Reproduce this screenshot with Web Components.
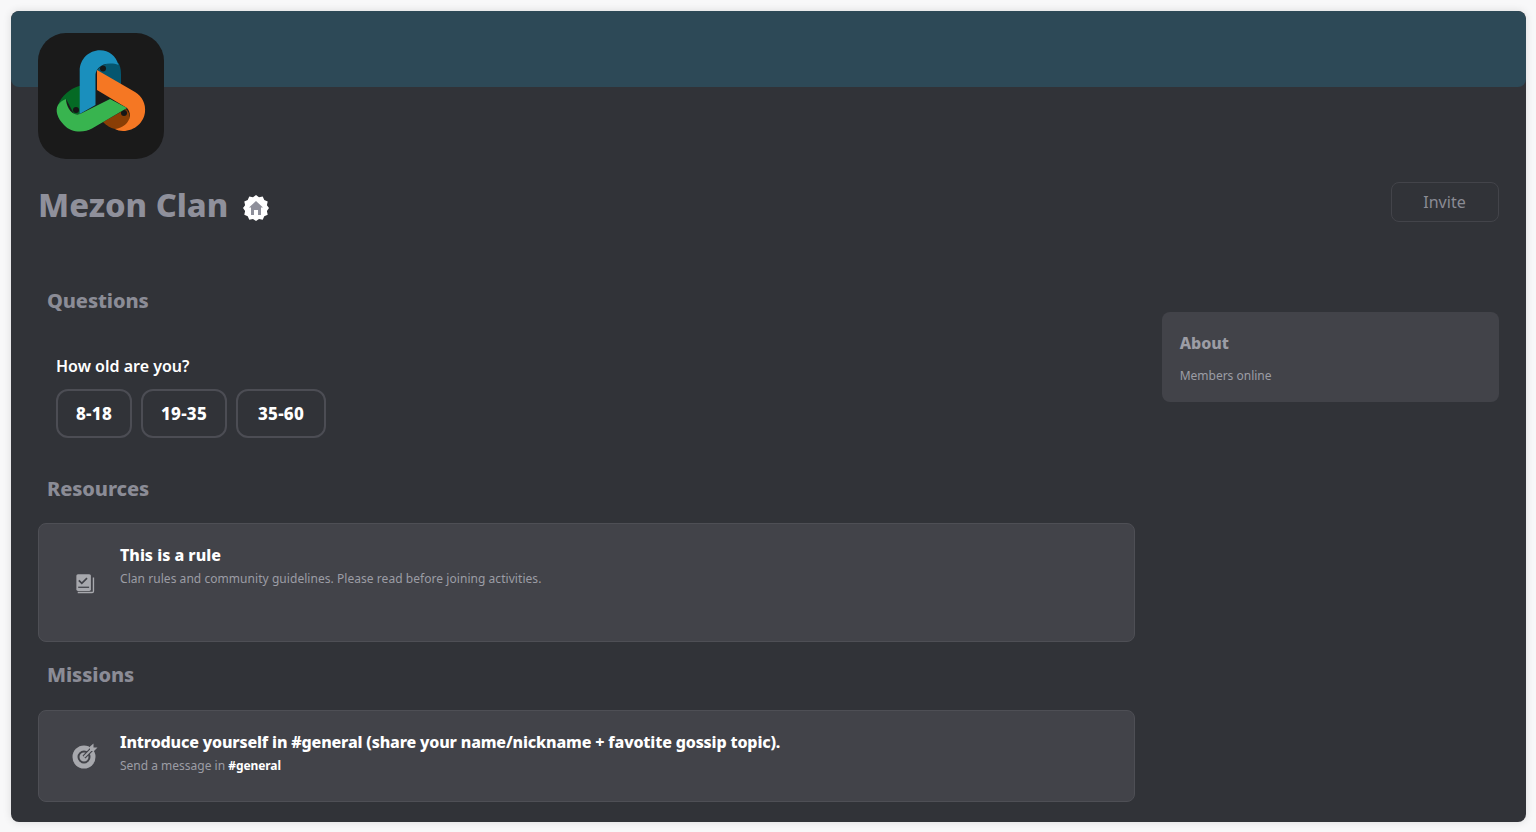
<!DOCTYPE html>
<html><head><meta charset="utf-8"><style>
html,body{margin:0;height:100%;background:#f8f8f9;overflow:hidden}
body{padding:10.5px;box-sizing:border-box;font-family:"Noto Sans","Liberation Sans",sans-serif}
</style></head><body>
<clan-page></clan-page>
<template id="t-page"><style>
:host{display:block;width:1515.5px;height:811.5px;background:#313338;border-radius:8px;box-shadow:0 0 8px rgba(0,0,0,.12);position:relative;overflow:hidden}
.banner{height:76.5px;background:#2d4957;border-radius:8px}
.main{padding:0 27.5px}
.logo{display:block;width:126px;height:126px;margin-top:-54px;position:relative}
.head{display:flex;justify-content:space-between;align-items:flex-start;margin-top:23px;height:40px}
.name{display:flex;align-items:center;gap:14px;font-size:32.700px;font-weight:800;line-height:46px;color:#8f909b}
.invite{box-sizing:border-box;width:108px;height:40px;border:1px solid #43444a;border-radius:8px;display:flex;align-items:center;justify-content:center;font-size:16px;color:#8a8b94}
.cols{display:flex;gap:27px;}
.left{width:1097px;padding-top:65px}
.right{width:337px;padding-top:90px}
.q{padding:40px 18px 0;}
.qt{font-size:16px;font-weight:600;color:#fff;line-height:22px}
.opts{display:flex;gap:9px;margin-top:12px}
</style>
<div class="banner"></div>
<div class="main">
<svg class="logo" viewBox="0 0 126 126"><rect width="126" height="126" rx="28" fill="#1a1a1a"/>
<path d="M58 40C60 34 66 31 72 30L80.500 30C82 33 83 36 83 41V52L59 38Z" fill="#05566f"/>
<circle cx="65" cy="35.500" r="3" fill="#161616"/>
<path d="M65 89L88 76C92 80 93 85 90 90C87 95 82 97 77 96C72 95 68 92 65 89Z" fill="#8a3e05"/>
<circle cx="86" cy="80" r="3" fill="#161616"/>
<path d="M41 53C32 56 24 62 20 72L28 66L36 81H42V53Z" fill="#056a25"/>
<circle cx="38" cy="77" r="3" fill="#161616"/>
<path d="M41.700 81V38C41.700 26 51 17.300 62 17.300C71 17.300 78 23 80.500 32C75 30 68 30 63 33C59 35.500 57.500 39 57.500 43V72Z" fill="#1a8fbd"/>
<path d="M59 37L97 59C104 63 108 71 107 79C106 89 97 98 85 98C82 98 79 97 77 96C85 95 91 90 92 83C92 80 91 77 89 75L59 57Z" fill="#f57723"/>
<path d="M42 81L72 66L89 75L54 95.500C46 100 33 100 26 92C19 85 17 77 20 72C22 69 25 67 28 66C28 72 33 84 42 81Z" fill="#38b44f"/>
</svg>
<div class="head"><div class="name">Mezon Clan <home-badge></home-badge></div><div class="invite">Invite</div></div>
<div class="cols">
<div class="left">
<sec-title>Questions</sec-title>
<div class="q"><div class="qt">How old are you?</div>
<div class="opts"><opt-btn style="width:76px">8-18</opt-btn><opt-btn style="width:86px">19-35</opt-btn><opt-btn style="width:90px">35-60</opt-btn></div></div>
<sec-title style="margin-top:37px">Resources</sec-title>
<info-card style="height:119px;margin-top:20px" data-kind="rule"><span slot="title">This is a rule</span><span style="letter-spacing:.05px">Clan rules and community guidelines. Please read before joining activities.</span></info-card>
<sec-title style="margin-top:19px">Missions</sec-title>
<info-card style="height:92px;margin-top:21px" data-kind="mission"><span slot="title" style="letter-spacing:-.16px">Introduce yourself in #general (share your name/nickname + favotite gossip topic).</span>Send a message in <b style="color:#fff;font-weight:700;letter-spacing:-.08px">#general</b></info-card>
</div>
<div class="right"><about-box></about-box></div>
</div></div></template>

<template id="t-sec"><style>:host{display:block;padding-left:9px;font-size:20px;font-weight:800;line-height:28px;color:#8b8c96;letter-spacing:-.1px}</style><slot></slot></template>
<template id="t-opt"><style>:host{display:flex;align-items:center;justify-content:center;height:49px;box-sizing:border-box;border:2px solid #4c4d54;border-radius:12px;font-size:17px;font-weight:800;letter-spacing:.3px;color:#fff}</style><slot></slot></template>
<template id="t-home"><style>:host{display:block;width:28px;height:28px;margin-top:5px}svg{display:block}</style>
<svg width="28" height="28" viewBox="0 0 28 28"><path fill="#fff" d="M14 1l3 2.300 3.700-.800 1.600 3.400 3.400 1.600-.8 3.700 2.100 2.800-2.100 3 .8 3.700-3.400 1.600-1.600 3.400-3.700-.8-3 2.100-3-2.100-3.700.8-1.600-3.400-3.400-1.600.8-3.700L1 14l2.100-2.800-.8-3.700 3.400-1.600 1.600-3.400 3.700.8z"/><path fill="#8e8f9a" d="M14 7l7 6.500h-2V21h-3v-5h-4v5H9v-7.500H7z"/></svg></template>
<template id="t-card"><style>
:host{display:flex;box-sizing:border-box;background:#424349;border:1px solid #4e4f55;border-radius:8px;position:relative}
.ic{width:81px;flex:none;display:flex;align-items:center;justify-content:center;padding-left:11px;box-sizing:border-box}
.tx{padding-top:20px}
.t{font-size:16px;font-weight:800;color:#fff;line-height:22px}
.d{font-size:12px;color:#9c9da5;line-height:17px;margin-top:4px}
</style><div class="ic"></div><div class="tx"><div class="t"><slot name="title"></slot></div><div class="d"><slot></slot></div></div></template>
<template id="t-about"><style>
:host{display:block;height:90px;box-sizing:border-box;background:#424349;border-radius:8px;padding:20px 18px}
.t{font-size:16px;font-weight:800;color:#9c9da5;line-height:22px}
.d{font-size:12px;color:#9c9da5;line-height:17px;margin-top:13px}
</style><div class="t">About</div><div class="d">Members online</div></template>
<script>
function reg(name,id,init){customElements.define(name,class extends HTMLElement{constructor(){super();const s=this.attachShadow({mode:"open"});s.appendChild(document.getElementById(id).content.cloneNode(true));}connectedCallback(){init&&init(this)}})}
const icons={rule:'<svg width="20" height="22" viewBox="0 0 22 24"><rect x="1.500" y="2.300" width="16" height="18.400" rx="1.800" fill="#a7a8ad"/><path fill="none" stroke="#424349" stroke-width="1.900" d="M4.200 9l3.300 3.300 5.700-5.600"/><path fill="none" stroke="#424349" stroke-width="1.400" d="M3.500 16.700H15.500"/><path fill="none" stroke="#a7a8ad" stroke-width="1.500" d="M20.300 6V21a1.500 1.500 0 0 1-1.500 1.500H3"/></svg>',
mission:'<svg width="26" height="26" viewBox="0 0 26 26"><circle cx="12" cy="14" r="11.500" fill="#a7a8ad"/><circle cx="12" cy="14" r="5.500" fill="none" stroke="#424349" stroke-width="2"/><circle cx="12" cy="14" r="2" fill="#a7a8ad"/><path d="M12 14L21 5" stroke="#424349" stroke-width="4"/><path d="M12 14L21 5" stroke="#a7a8ad" stroke-width="1.800"/><path fill="#a7a8ad" d="M18 8V3.500L21.500 0.500V4.500H25.500L22 8z"/></svg>'};
reg("sec-title","t-sec");reg("opt-btn","t-opt");reg("home-badge","t-home");reg("about-box","t-about");
reg("info-card","t-card",el=>{el.shadowRoot.querySelector(".ic").innerHTML=icons[el.dataset.kind]});
reg("clan-page","t-page");
</script></body></html>
